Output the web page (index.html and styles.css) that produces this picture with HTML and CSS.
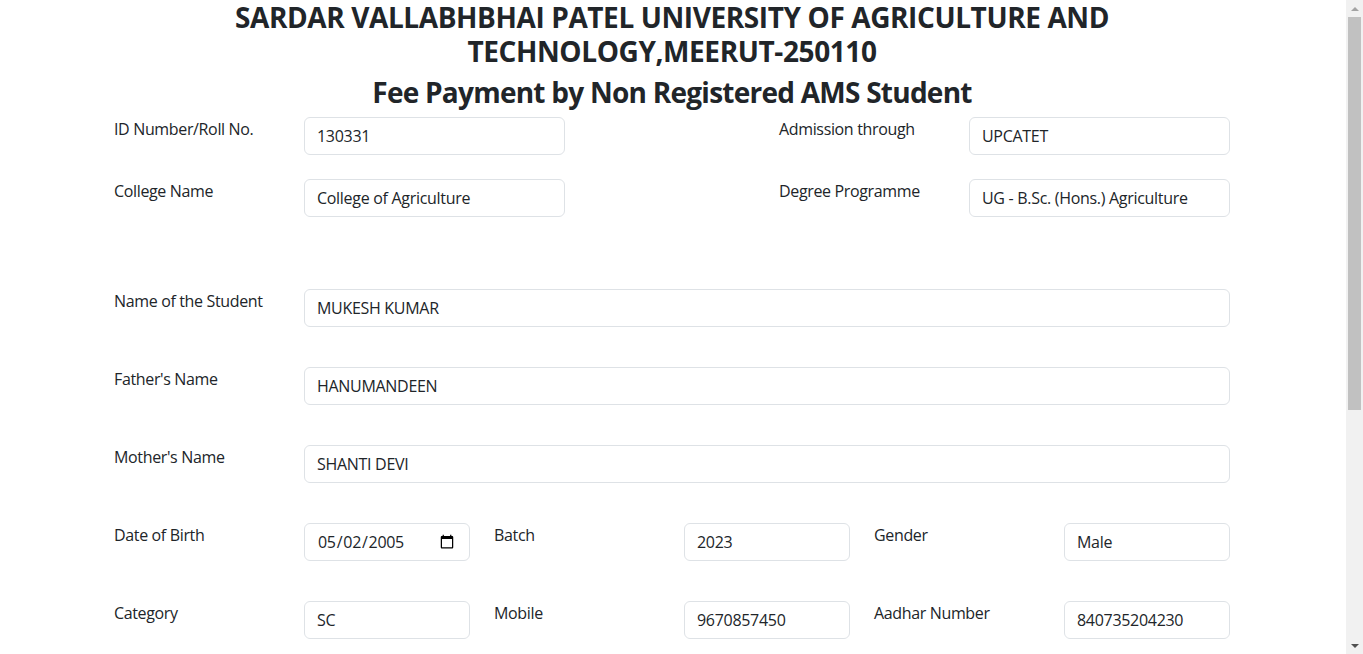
FILE: index.html
```html
<!DOCTYPE html>
<html lang="en">
<head>
<meta charset="utf-8">
<title>Fee Payment by Non Registered AMS Student</title>
<link rel="stylesheet" href="styles.css">
</head>
<body>
<div class="page">
<div class="container">
  <h3 class="title">SARDAR VALLABHBHAI PATEL UNIVERSITY OF AGRICULTURE AND TECHNOLOGY,MEERUT-250110</h3>
  <h3 class="title subtitle">Fee Payment by Non Registered AMS Student</h3>
  <form class="form">
    <div class="row row-first">
      <label class="lbl span2">ID Number/Roll No.</label>
      <input class="ctl span3" type="text" value="130331">
      <div class="span2"></div>
      <label class="lbl span2">Admission through</label>
      <input class="ctl span3" type="text" value="UPCATET">
    </div>
    <div class="row row-second">
      <label class="lbl span2">College Name</label>
      <input class="ctl span3" type="text" value="College of Agriculture">
      <div class="span2"></div>
      <label class="lbl span2">Degree Programme</label>
      <input class="ctl span3" type="text" value="UG - B.Sc. (Hons.) Agriculture">
    </div>
    <div class="row">
      <label class="lbl span2">Name of the Student</label>
      <input class="ctl span10" type="text" value="MUKESH KUMAR">
    </div>
    <div class="row">
      <label class="lbl span2">Father's Name</label>
      <input class="ctl span10" type="text" value="HANUMANDEEN">
    </div>
    <div class="row">
      <label class="lbl span2">Mother's Name</label>
      <input class="ctl span10" type="text" value="SHANTI DEVI">
    </div>
    <div class="row">
      <label class="lbl span2">Date of Birth</label>
      <input class="ctl span2" type="date" value="2005-05-02">
      <label class="lbl span2">Batch</label>
      <input class="ctl span2" type="text" value="2023">
      <label class="lbl span2">Gender</label>
      <input class="ctl span2" type="text" value="Male">
    </div>
    <div class="row">
      <label class="lbl span2">Category</label>
      <input class="ctl span2" type="text" value="SC">
      <label class="lbl span2">Mobile</label>
      <input class="ctl span2" type="text" value="9670857450">
      <label class="lbl span2">Aadhar Number</label>
      <input class="ctl span2" type="text" value="840735204230">
    </div>
    <div class="row">
      <label class="lbl span2">Email</label>
      <input class="ctl span10" type="text" value="">
    </div>
    <div class="row">
      <label class="lbl span2">Address</label>
      <input class="ctl span10" type="text" value="">
    </div>
    <div class="row">
      <label class="lbl span2">Fee Amount</label>
      <input class="ctl span4" type="text" value="">
    </div>
    <div class="actions">
      <button class="btn" type="button">Proceed to Pay</button>
    </div>
  </form>
</div>
</div>
<div class="vscroll" aria-hidden="true">
  <div class="sb-btn"><span class="arrow-up"></span></div>
  <div class="sb-thumb"></div>
  <div class="sb-track"></div>
  <div class="sb-btn"><span class="arrow-down"></span></div>
</div>
</body>
</html>
```
FILE: styles.css
```css
html, body {
  margin: 0;
  padding: 0;
}
body {
  display: flex;
  height: 100vh;
  overflow: hidden;
  font-family: "Open Sans", "Noto Sans", "Liberation Sans", sans-serif;
  font-size: 16px;
  line-height: 1.5;
  letter-spacing: -0.35px;
  color: #212529;
  background: #fff;
}
.page {
  flex: 1;
  min-width: 0;
  overflow: hidden;
}
.container {
  max-width: 1140px;
  margin: 0 auto;
  padding: 0 13px 0 11px;
  box-sizing: border-box;
}
.title {
  margin: 0 0 8px;
  font-size: 28px;
  line-height: 1.2;
  font-weight: 700;
  text-align: center;
  letter-spacing: -0.4px;
  padding-top: 1px;
}
.subtitle {
  letter-spacing: -0.75px;
  padding-top: 0;
  margin-bottom: 7px;
}
.row {
  display: grid;
  grid-template-columns: repeat(12, 1fr);
  column-gap: 24px;
  margin-bottom: 40px;
  align-items: start;
}
.row-first { margin-bottom: 24px; }
.row-second { margin-bottom: 72px; }
.span2 { grid-column: span 2; }
.span3 { grid-column: span 3; }
.span4 { grid-column: span 4; }
.span10 { grid-column: span 10; }
.lbl {
  line-height: 24px;
}
.ctl {
  box-sizing: border-box;
  width: 100%;
  height: 38px;
  padding: 6px 12px;
  font-family: inherit;
  font-size: 16px;
  line-height: 24px;
  letter-spacing: -0.3px;
  color: #212529;
  background: #fff;
  border: 1px solid #dee2e6;
  border-radius: 6px;
  outline: none;
}
.actions {
  display: flex;
  justify-content: center;
  padding-bottom: 80px;
}
.btn {
  font-family: inherit;
  font-size: 16px;
  line-height: 24px;
  padding: 6px 12px;
  color: #fff;
  background: #0d6efd;
  border: 1px solid #0d6efd;
  border-radius: 6px;
}

/* classic vertical scrollbar strip */
.vscroll {
  flex: none;
  width: 17px;
  height: 100%;
  background: #f1f1f1;
  display: flex;
  flex-direction: column;
}
.sb-btn {
  flex: none;
  height: 17px;
  display: flex;
  align-items: center;
  justify-content: center;
}
.arrow-up {
  width: 0;
  height: 0;
  border-left: 4px solid transparent;
  border-right: 4px solid transparent;
  border-bottom: 4px solid #a3a3a3;
}
.arrow-down {
  width: 0;
  height: 0;
  border-left: 4px solid transparent;
  border-right: 4px solid transparent;
  border-top: 4px solid #505050;
}
.sb-thumb {
  flex: none;
  height: 393px;
  margin: 0 2px;
  background: #c1c1c1;
}
.sb-track {
  flex: 1;
}
```
